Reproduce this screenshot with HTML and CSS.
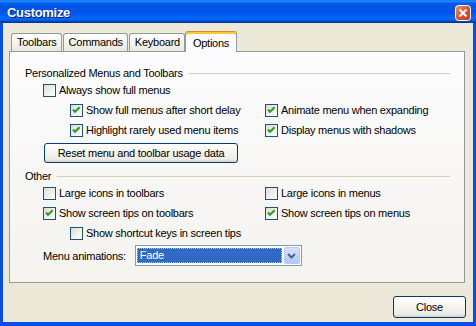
FILE: index.html
```html
<!DOCTYPE html>
<html>
<head>
<meta charset="utf-8">
<title>Customize</title>
<link rel="stylesheet" href="styles.css">
</head>
<body>
<div class="window">
  <div class="titlebar">
    <span class="title">Customize</span>
    <span class="title-close">
      <svg width="16" height="16" viewBox="0 0 16 16">
        <defs>
          <linearGradient id="cg" x1="0" y1="0" x2="1" y2="1">
            <stop offset="0" stop-color="#f0936f"/>
            <stop offset="0.45" stop-color="#e15a33"/>
            <stop offset="1" stop-color="#c1361a"/>
          </linearGradient>
        </defs>
        <rect x="0.5" y="0.5" width="15" height="15" rx="3" fill="url(#cg)" stroke="#ffffff"/>
        <path d="M4.5 4.5l7 7M11.5 4.5l-7 7" stroke="#ffffff" stroke-width="2"/>
      </svg>
    </span>
  </div>
  <div class="frame">
    <div class="tabs">
      <div class="tab">Toolbars</div>
      <div class="tab">Commands</div>
      <div class="tab">Keyboard</div>
      <div class="tab active">Options</div>
    </div>
    <div class="panel">
      <div class="group-title">Personalized Menus and Toolbars</div>
      <div class="group">
        <div class="row"><span class="cb"></span>Always show full menus</div>
        <div class="pairs pairs-sub">
          <div class="row"><span class="cb"><svg width="11" height="11" viewBox="0 0 11 11"><path d="M2 4.5l2 2.3L8.6 2.2" stroke="#21a121" stroke-width="2" fill="none"/></svg></span>Show full menus after short delay</div>
          <div class="row"><span class="cb"><svg width="11" height="11" viewBox="0 0 11 11"><path d="M2 4.5l2 2.3L8.6 2.2" stroke="#21a121" stroke-width="2" fill="none"/></svg></span>Animate menu when expanding</div>
          <div class="row"><span class="cb"><svg width="11" height="11" viewBox="0 0 11 11"><path d="M2 4.5l2 2.3L8.6 2.2" stroke="#21a121" stroke-width="2" fill="none"/></svg></span>Highlight rarely used menu items</div>
          <div class="row"><span class="cb"><svg width="11" height="11" viewBox="0 0 11 11"><path d="M2 4.5l2 2.3L8.6 2.2" stroke="#21a121" stroke-width="2" fill="none"/></svg></span>Display menus with shadows</div>
        </div>
        <button class="btn btn-reset">Reset menu and toolbar usage data</button>
      </div>
      <div class="group-title group-title-other">Other</div>
      <div class="group">
        <div class="pairs pairs-other">
          <div class="row"><span class="cb"></span>Large icons in toolbars</div>
          <div class="row"><span class="cb"></span>Large icons in menus</div>
          <div class="row"><span class="cb"><svg width="11" height="11" viewBox="0 0 11 11"><path d="M2 4.5l2 2.3L8.6 2.2" stroke="#21a121" stroke-width="2" fill="none"/></svg></span>Show screen tips on toolbars</div>
          <div class="row"><span class="cb"><svg width="11" height="11" viewBox="0 0 11 11"><path d="M2 4.5l2 2.3L8.6 2.2" stroke="#21a121" stroke-width="2" fill="none"/></svg></span>Show screen tips on menus</div>
        </div>
        <div class="row row-sub"><span class="cb"></span>Show shortcut keys in screen tips</div>
        <div class="field">
          <span class="field-label">Menu animations:</span>
          <div class="select">
            <span class="select-value">Fade</span>
            <span class="select-btn">
              <svg width="9" height="6" viewBox="0 0 9 6"><path d="M1 1l3.5 3.5L8 1" stroke="#4d6185" stroke-width="2" fill="none"/></svg>
            </span>
          </div>
        </div>
      </div>
    </div>
    <div class="footer">
      <button class="btn btn-close">Close</button>
    </div>
  </div>
</div>
</body>
</html>
```
FILE: styles.css
```css
html, body {
  margin: 0;
  padding: 0;
}
body {
  width: 476px;
  height: 326px;
  overflow: hidden;
  font-family: "Liberation Sans", Arial, sans-serif;
  font-size: 11px;
  letter-spacing: -0.25px;
  color: #000;
}
.window {
  width: 476px;
  height: 326px;
  display: flex;
  flex-direction: column;
}
.titlebar {
  height: 23px;
  flex: none;
  display: flex;
  align-items: center;
  justify-content: space-between;
  padding: 1px 5px 0 7px;
  box-sizing: border-box;
  background: linear-gradient(180deg, #0058ee 0%, #3593ff 4%, #288eff 6%, #127dff 8%, #036ffc 10%, #0262ee 14%, #0057e5 20%, #0054e3 24%, #0055eb 56%, #005bf5 66%, #026afe 76%, #0062ef 86%, #0052d6 92%, #0040ab 94%, #003092 100%);
}
.title {
  color: #fff;
  font-weight: bold;
  font-size: 13px;
  letter-spacing: -0.3px;
  text-shadow: 1px 1px 0 #0a1883;
}
.title-close {
  display: flex;
  width: 16px;
  height: 16px;
  margin-top: 1px;
}
.frame {
  flex: 1;
  display: flex;
  flex-direction: column;
  background: #ece9d8;
  border-style: solid;
  border-color: #0a4fe3;
  border-width: 0 3px 4px 3px;
  padding: 8px 8px 0 6px;
}
.tabs {
  display: flex;
  align-items: flex-start;
  height: 21px;
  padding-left: 2px;
}
.tab {
  margin-top: 2px;
  margin-right: 1px;
  height: 18px;
  box-sizing: border-box;
  padding: 0 4px 0 5px;
  border: 1px solid #919b9c;
  border-bottom: none;
  border-radius: 3px 3px 0 0;
  background: linear-gradient(180deg, #ffffff, #f3f2ed 60%, #e8e6dc);
  line-height: 17px;
}
.tab.active {
  position: relative;
  z-index: 1;
  margin-top: 0;
  margin-left: -1px;
  height: 21px;
  padding: 3px 7px 0 7px;
  border-top: 1px solid #e68b2c;
  box-shadow: inset 0 2px 0 #ffc73c;
  background: #fcfcfe;
  line-height: 16px;
}
.panel {
  margin-top: -1px;
  width: 456px;
  height: 232px;
  box-sizing: border-box;
  border: 1px solid #919b9c;
  background: linear-gradient(180deg, #fcfcfe, #f4f3ee);
  padding: 15px 14px 0 15px;
}
.group-title {
  display: flex;
  align-items: center;
  height: 13px;
  line-height: 13px;
}
.group-title::after {
  content: "";
  flex: 1;
  border-top: 1px solid #d0d0bf;
  margin-left: 6px;
}
.group-title-other {
  margin-top: 7px;
}
.group {
  padding-left: 18px;
  display: flex;
  flex-direction: column;
  align-items: flex-start;
}
.group:first-of-type {
  margin-top: 1px;
}
.row {
  display: flex;
  align-items: center;
  gap: 3px;
  height: 20px;
  white-space: nowrap;
}
.cb {
  width: 13px;
  height: 13px;
  box-sizing: border-box;
  border: 1px solid #1c5180;
  background: linear-gradient(135deg, #dcdcd7 0%, #f2f2ee 60%, #ffffff 100%);
  display: flex;
  flex: none;
}
.pairs {
  display: grid;
}
.pairs-sub {
  margin-left: 27px;
  grid-template-columns: 195px auto;
}
.pairs-other {
  grid-template-columns: 222px auto;
}
.row-sub {
  margin-left: 27px;
}
.btn {
  font: inherit;
  letter-spacing: inherit;
  color: #000;
  border: 1px solid #003c74;
  border-radius: 3px;
  background: linear-gradient(180deg, #ffffff 0%, #f7f7f4 35%, #ecebe6 85%, #d6d0c5 100%);
  padding: 0;
  box-sizing: border-box;
}
.btn-reset {
  margin-top: 3px;
  margin-left: 1px;
  width: 194px;
  height: 20px;
}
.field {
  display: flex;
  align-items: center;
  gap: 9px;
  margin-top: 2px;
}
.select {
  width: 167px;
  height: 21px;
  box-sizing: border-box;
  border: 1px solid #7f9db9;
  background: #fff;
  padding: 1px;
  display: flex;
  gap: 2px;
}
.select-value {
  flex: 1;
  margin: 1px 0;
  background: #316ac5;
  color: #fff;
  border: 1px dotted #d7c37a;
  padding-left: 2px;
  line-height: 13px;
  box-sizing: border-box;
}
.select-btn {
  width: 16px;
  flex: none;
  box-sizing: border-box;
  border: 1px solid #b9cbf3;
  border-radius: 2px;
  background: linear-gradient(180deg, #d6e2fd, #c1d3fb 60%, #b2c6f5);
  display: flex;
  align-items: center;
  justify-content: center;
}
.footer {
  display: flex;
  justify-content: flex-end;
  margin-top: 13px;
  width: 457px;
}
.btn-close {
  width: 73px;
  height: 22px;
}
```
